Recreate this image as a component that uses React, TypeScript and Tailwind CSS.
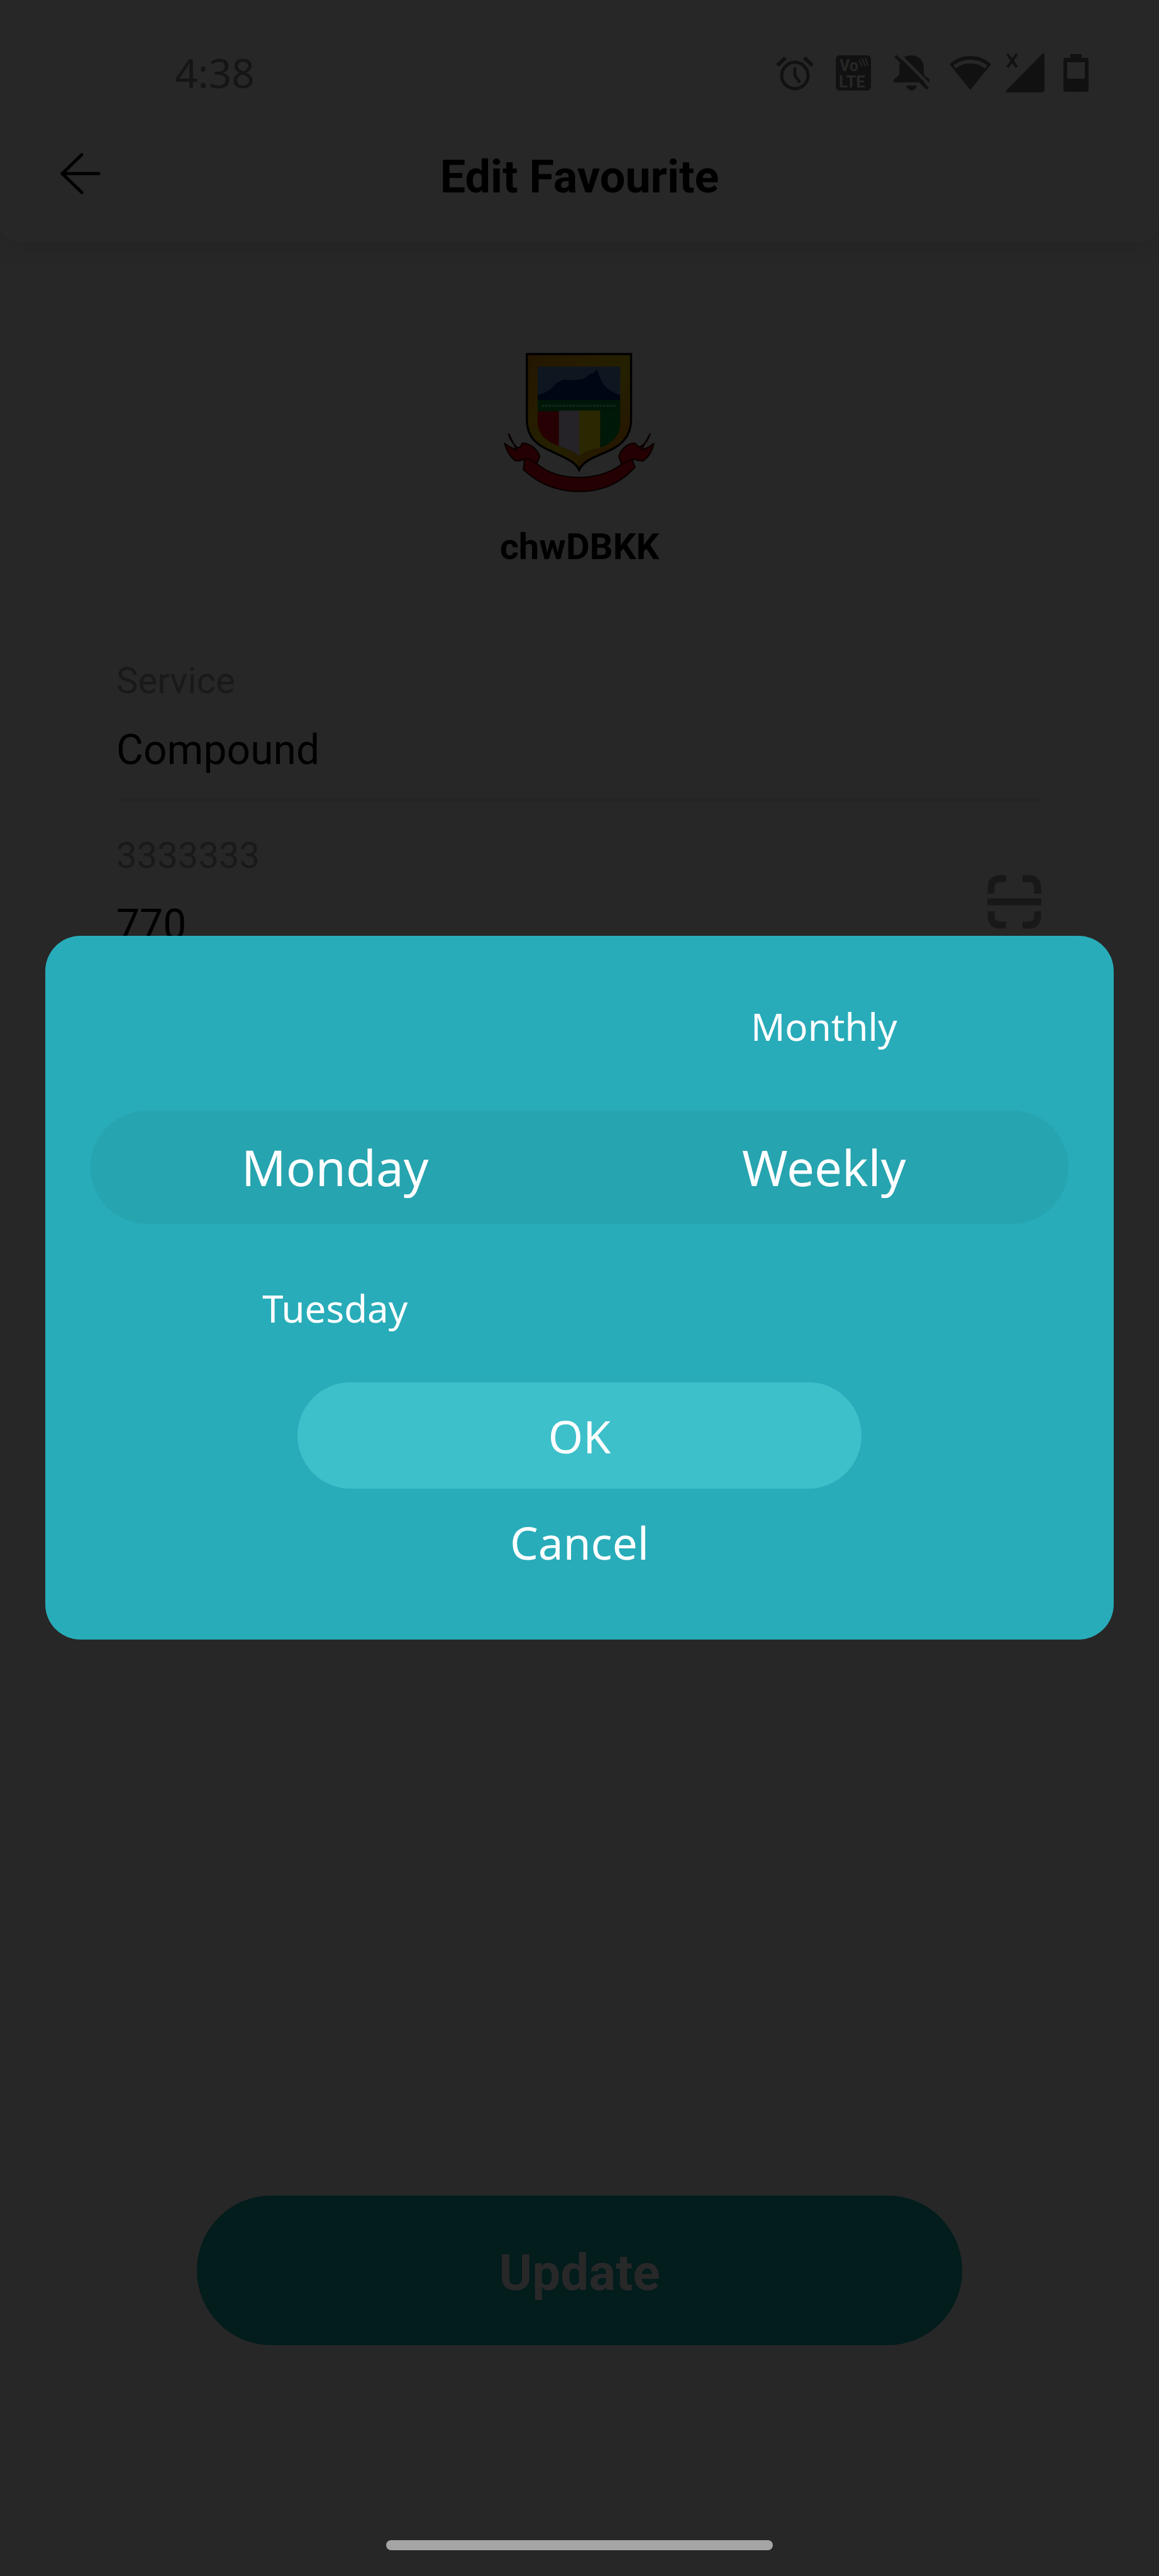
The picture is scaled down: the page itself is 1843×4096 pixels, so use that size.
import React from "react";

const AlarmIcon = () => (
  <svg viewBox="0 0 60 56" className="h-14 w-15" fill="none" stroke="#111111" strokeWidth="5">
    <circle cx="30" cy="32" r="21" />
    <path d="M30 19v13l8 11" strokeWidth="4.5" />
    <path d="M2 16 15 4M58 16 45 4" strokeWidth="6" />
  </svg>
);

const VolteIcon = () => (
  <svg viewBox="0 0 56 56" className="size-14">
    <rect width="56" height="56" rx="6" fill="#111111" />
    <g fill="#272727" fontFamily="Roboto, sans-serif" fontWeight="700">
      <text x="6" y="25" fontSize="25">Vo</text>
      <text x="5" y="51" fontSize="26">LTE</text>
    </g>
    <path d="M37 7l5 10M42 5l5 12M47 4l4 12" stroke="#272727" strokeWidth="2" />
  </svg>
);

const BellOffIcon = () => (
  <svg viewBox="0 0 58 56" className="h-14 w-[58px]">
    <path d="M28 0C40 0 48 9 48 20V31L57 38V43H0V39L9 31V20C9 9 16 0 28 0Z" fill="#111111" />
    <path d="M6-4 60 50" stroke="#272727" strokeWidth="5" />
    <path d="M3 1 54 53" stroke="#111111" strokeWidth="5" />
    <path d="M20 48h17c-1 4-4 8-8 8s-8-4-9-8Z" fill="#111111" />
  </svg>
);

const WifiIcon = () => (
  <svg viewBox="0 0 66 54" className="h-[54px] w-[66px]" fill="#111111">
    <path d="M33 54 0 13C9 5 20 0 33 0s24 5 33 13L33 54Z" />
    <path d="M6 15C14 9 23 6 33 6s19 3 27 9l-4 5c-7-6-14-8-23-8s-16 2-23 8Z" fill="#272727" />
  </svg>
);

const SignalIcon = () => (
  <svg viewBox="0 0 62 62" className="size-[62px]" fill="#111111">
    <path d="M59 0q3-1 3 3v54q0 5-5 5H2q-3-1-1-3L59 0Z" />
    <path d="M3 1 18 22M18 1 3 22" stroke="#111111" strokeWidth="4" />
  </svg>
);

const BatteryIcon = () => (
  <svg viewBox="0 0 40 60" className="h-15 w-10">
    <path
      fillRule="evenodd"
      fill="#111111"
      d="M11 0h18v6h7q4 0 4 4v46q0 4-4 4H4q-4 0-4-4V10q0-4 4-4h7ZM6 13v26h28V13Z"
    />
  </svg>
);

const Crest = () => (
  <svg viewBox="110 105 860 790" className="h-[225px] w-[245px]" role="img" aria-label="DBKK crest">
    <defs>
      <linearGradient id="gold" x1="0" y1="0" x2="1" y2="1">
        <stop offset="0" stopColor="#241600" />
        <stop offset="0.3" stopColor="#261c00" />
        <stop offset="0.55" stopColor="#242000" />
        <stop offset="0.8" stopColor="#261800" />
        <stop offset="1" stopColor="#242000" />
      </linearGradient>
      <clipPath id="field">
        <path d="M306 188H768V500C768 590 700 630 640 645C590 655 560 665 538 690C516 665 486 655 430 635C370 610 306 580 306 490Z" />
      </clipPath>
    </defs>
    <path
      d="M246 119H828V490C826 590 760 635 690 665C630 692 560 715 538 765C516 715 440 692 380 660C310 630 248 590 246 490Z"
      fill="url(#gold)"
      stroke="#000"
      strokeWidth="12"
    />
    <g clipPath="url(#field)">
      <rect x="300" y="180" width="480" height="180" fill="#0e1620" />
      <path d="M300 350C370 335 380 310 415 280L450 262C500 264 540 270 575 250L600 230L622 225L636 202L650 240C665 285 690 320 768 348V400H300Z" fill="#000614" />
      <path d="M300 375H780V440H300Z" fill="#001606" />
      <path d="M330 408H745" stroke="#102818" strokeWidth="12" strokeDasharray="14 5" />
      <rect x="300" y="438" width="125" height="260" fill="#260003" />
      <rect x="425" y="434" width="114" height="270" fill="#252228" />
      <rect x="539" y="434" width="117" height="270" fill="#2a2800" />
      <rect x="656" y="434" width="120" height="270" fill="#001807" />
    </g>
    <g fill="#250002" stroke="#0a0000" strokeWidth="8" strokeLinejoin="round">
      <path d="M145 565C150 600 175 625 190 640C205 645 215 635 220 618C250 612 300 640 318 690L300 735L232 705C210 715 190 718 178 712C150 690 130 650 122 618L155 640L190 655Z" />
      <path d="M934 565C925 600 905 620 882 636C870 640 860 630 852 618C820 612 775 640 760 690L775 735L845 705C870 715 888 718 900 712C930 690 948 650 955 618L925 640L885 655Z" />
      <path d="M232 712L228 765C320 850 420 886 538 886S760 850 850 750L832 705L775 735C700 790 620 808 538 808S370 790 300 730L250 700Z" />
    </g>
  </svg>
);

const ScanIcon = () => (
  <svg viewBox="0 0 86 86" className="size-[86px]" fill="none" stroke="#181818" strokeWidth="11">
    <path d="M6 30V21Q6 6 21 6H30M56 6H65Q80 6 80 21V30M80 58V65Q80 80 65 80H56M30 80H21Q6 80 6 65V58M0 43H86" />
  </svg>
);

type Option = { name: string; state: "idle" | "selected" | "empty" };

const Wheel = ({ label, options }: { label: string; options: Option[] }) => (
  <ul role="listbox" aria-label={label} className="flex flex-1 flex-col text-center">
    {options.map((o) => (
      <li
        key={o.name + o.state}
        role="option"
        aria-selected={o.state === "selected"}
        className={
          o.state === "selected"
            ? "flex h-[224px] items-center justify-center text-[78px] leading-none"
            : "flex h-[224px] items-center justify-center text-[60px] leading-none"
        }
      >
        {o.name}
      </li>
    ))}
  </ul>
);

export default function App() {
  return (
    <div className="relative flex min-h-screen flex-col bg-[#272727] font-[Roboto,sans-serif] text-black">
      <header className="rounded-b-[32px] pb-[54px] shadow-[0_10px_20px_#252525]">
        <div className="flex h-[232px] items-center justify-between pr-[92px] pl-[278px]">
          <span className="font-['Noto_Sans',sans-serif] text-[64px] text-[#151515]">4:38</span>
          <div className="flex items-center">
            <div className="grid grid-cols-[repeat(4,93px)] items-center justify-items-center">
              <AlarmIcon />
              <VolteIcon />
              <BellOffIcon />
              <WifiIcon />
            </div>
            <div className="grid grid-cols-[repeat(2,81px)] items-center justify-items-center">
              <SignalIcon />
              <BatteryIcon />
            </div>
          </div>
        </div>
        <div className="grid grid-cols-[1fr_auto_1fr] items-start px-[96px]">
          <button aria-label="Back" className="flex h-[88px] items-center justify-self-start">
            <svg viewBox="0 0 64 66" className="h-[66px] w-16" fill="none" stroke="#000" strokeWidth="5" strokeLinecap="round">
              <path d="M34 3 3 33 34 63M3 33H61" />
            </svg>
          </button>
          <h1 className="text-[72px] leading-[100px] font-bold">Edit Favourite</h1>
        </div>
      </header>

      <main className="flex flex-1 flex-col">
        <section className="mt-[173px] flex flex-col items-center">
          <Crest />
          <h2 className="mt-[50px] text-[58px] leading-[70px] font-bold">chwDBKK</h2>
        </section>

        <form className="mt-[138px] pr-[187px] pl-[185px]">
          <div className="flex h-[232px] flex-col border-b-4 border-[#242424]">
            <label htmlFor="service" className="text-[58px] leading-[80px] text-[#191919]">Service</label>
            <input id="service" defaultValue="Compound" className="mt-[26px] h-[90px] w-full text-[66px] leading-[90px]" />
          </div>
          <div className="mt-[46px] flex h-[228px] items-center justify-between">
            <div className="flex h-full flex-col">
              <label htmlFor="account" className="text-[58px] leading-[80px] text-[#191919]">3333333</label>
              <input id="account" defaultValue="770" className="mt-[26px] h-[90px] w-full text-[66px] leading-[90px]" />
            </div>
            <button type="button" aria-label="Scan">
              <ScanIcon />
            </button>
          </div>
        </form>

        <button className="mx-[17%] mt-auto h-[238px] rounded-full bg-[#031c1c] pt-2 text-[80px] font-bold text-[#292829]">
          Update
        </button>
      </main>

      <footer className="flex h-[367px] items-end justify-center pb-[41px]">
        <div className="h-4 w-1/3 rounded-full bg-[#a5a5a5]" />
      </footer>

      <div
        role="dialog"
        aria-label="Schedule"
        className="absolute inset-x-[72px] top-[1488px] flex flex-col items-center rounded-[56px] bg-[#28acb9] px-[72px] pt-[32px] pb-[71px] font-['Noto_Sans',sans-serif] text-white"
      >
        <div className="relative w-full">
          <div className="absolute inset-x-0 top-[246px] h-[180px] rounded-full bg-[#26a4af]" />
          <div className="relative flex">
            <Wheel
              label="Day"
              options={[
                { name: "", state: "empty" },
                { name: "Monday", state: "selected" },
                { name: "Tuesday", state: "idle" },
              ]}
            />
            <Wheel
              label="Frequency"
              options={[
                { name: "Monthly", state: "idle" },
                { name: "Weekly", state: "selected" },
                { name: "", state: "empty" },
              ]}
            />
          </div>
        </div>
        <button className="mt-[6px] h-[169px] w-[897px] rounded-full bg-[#3dc0ca] pt-1 text-[71px]">OK</button>
        <button className="h-[169px] w-[897px] pt-1 text-[71px]">Cancel</button>
      </div>
    </div>
  );
}
